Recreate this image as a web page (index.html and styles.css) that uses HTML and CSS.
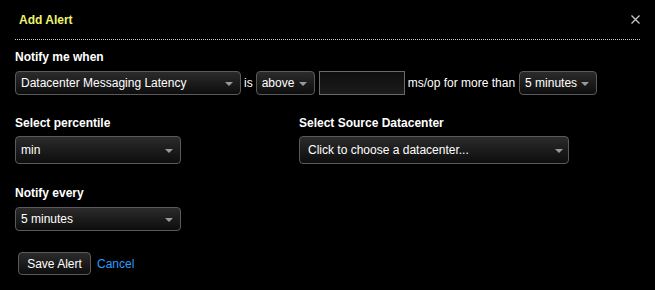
FILE: index.html
```html
<!DOCTYPE html>
<html>
<head>
<meta charset="utf-8">
<link rel="stylesheet" href="styles.css">
</head>
<body>
<div class="modal">
  <div class="header">
    <span class="title">Add Alert</span>
    <svg class="close" width="9" height="9" viewBox="0 0 9 9"><path d="M0.5 0.5 L8.5 8.5 M8.5 0.5 L0.5 8.5" stroke="#c8c8c8" stroke-width="1.3"/></svg>
  </div>

  <div class="label first">Notify me when</div>
  <div class="row">
    <div class="select w-metric"><span>Datacenter Messaging Latency</span><i class="arrow"></i></div>
    <span class="txt">is</span>
    <div class="select w-cmp"><span>above</span><i class="arrow"></i></div>
    <div class="input"></div>
    <span class="txt unit">ms/op for more than</span>
    <div class="select w-dur"><span>5 minutes</span><i class="arrow"></i></div>
  </div>

  <div class="cols">
    <div class="col">
      <div class="label">Select percentile</div>
      <div class="select tall w-small"><span>min</span><i class="arrow"></i></div>
    </div>
    <div class="col">
      <div class="label">Select Source Datacenter</div>
      <div class="select tall w-dc chosen"><span>Click to choose a datacenter...</span><i class="arrow"></i></div>
    </div>
  </div>

  <div class="label every">Notify every</div>
  <div class="select w-small"><span>5 minutes</span><i class="arrow"></i></div>

  <div class="actions">
    <div class="btn">Save Alert</div>
    <a class="cancel">Cancel</a>
  </div>
</div>
</body>
</html>
```

FILE: styles.css
```css
html, body {
  margin: 0;
  padding: 0;
  background: #000;
}
body {
  font-family: "Liberation Sans", Arial, Helvetica, sans-serif;
  color: #fff;
  width: 655px;
  height: 290px;
  overflow: hidden;
}
.modal {
  padding: 0 15px;
}
.header {
  display: flex;
  justify-content: space-between;
  align-items: flex-start;
  padding-top: 13px;
  height: 26px;
  border-bottom: 1px dotted #cfcfcf;
}
.title {
  font-size: 12px;
  font-weight: bold;
  line-height: 14px;
  color: #eef46c;
  padding-left: 4px;
}
.close {
  margin-top: 2px;
}
.label {
  font-size: 12px;
  font-weight: bold;
  line-height: 14px;
  margin-bottom: 6px;
}
.label.first {
  margin-top: 10px;
  margin-bottom: 7px;
}
.row {
  display: flex;
  align-items: center;
  height: 24px;
}
.txt {
  font-size: 12px;
  margin: 0 3px;
  white-space: nowrap;
}
.txt.unit {
  margin: 0 4px 0 3px;
}
.select {
  box-sizing: border-box;
  height: 24px;
  border: 1px solid #5a5a5a;
  border-radius: 4px;
  background: linear-gradient(#2b2b2b, #0d0d0d);
  display: flex;
  align-items: center;
  justify-content: space-between;
  padding: 0 7px 0 5px;
  font-size: 12px;
  white-space: nowrap;
}
.select.tall {
  height: 28px;
}
.select.chosen {
  padding: 0 5px 0 8px;
}
.arrow {
  width: 0;
  height: 0;
  margin-top: 1px;
  border-left: 4px solid transparent;
  border-right: 4px solid transparent;
  border-top: 4px solid #9a9a9a;
}
.w-metric { width: 226px; }
.w-cmp { width: 59px; }
.w-dur { width: 78px; }
.w-small { width: 166px; }
.w-dc { width: 270px; }
.input {
  box-sizing: border-box;
  width: 86px;
  height: 24px;
  margin-left: 4px;
  border: 1px solid #6a6a6a;
  background: linear-gradient(#0e0e0e, #1c1c1c);
}
.cols {
  display: grid;
  grid-template-columns: 284px auto;
  margin-top: 21px;
}
.label.every {
  margin-top: 22px;
  margin-bottom: 7px;
}
.actions {
  display: flex;
  align-items: center;
  margin-top: 21px;
  padding-left: 3px;
}
.btn {
  box-sizing: border-box;
  width: 73px;
  height: 23px;
  border: 1px solid #5a5a5a;
  border-radius: 4px;
  background: linear-gradient(#2b2b2b, #0d0d0d);
  font-size: 12px;
  display: flex;
  align-items: center;
  justify-content: center;
}
.cancel {
  font-size: 12px;
  color: #2b9cff;
  margin-left: 6px;
}
```
